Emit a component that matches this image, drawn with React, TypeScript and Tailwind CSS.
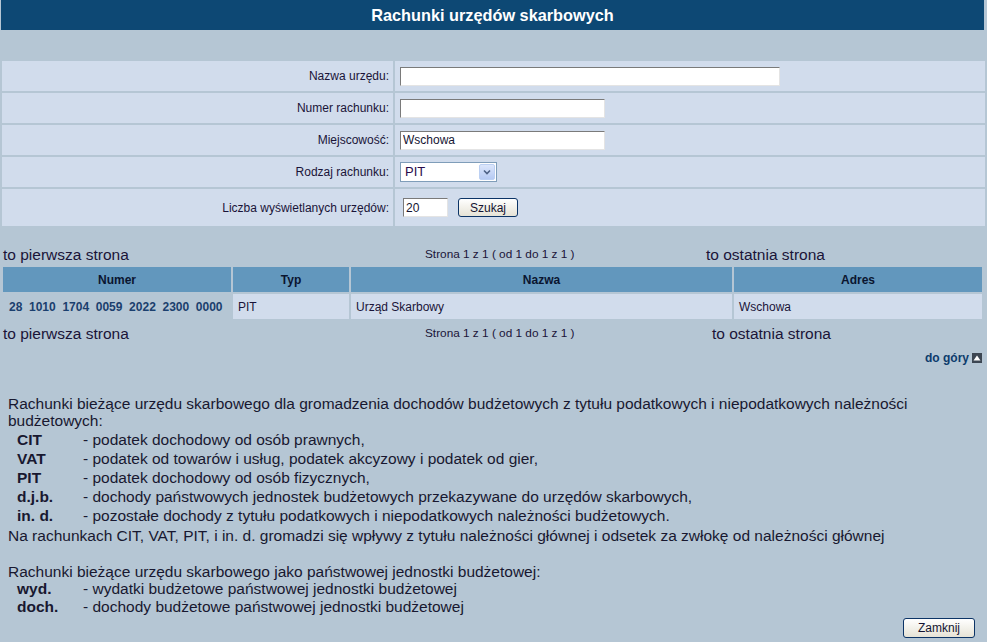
import React from "react";

const codes = [
  { code: "CIT", text: "- podatek dochodowy od osób prawnych," },
  { code: "VAT", text: "- podatek od towarów i usług, podatek akcyzowy i podatek od gier," },
  { code: "PIT", text: "- podatek dochodowy od osób fizycznych," },
  { code: "d.j.b.", text: "- dochody państwowych jednostek budżetowych przekazywane do urzędów skarbowych," },
  { code: "in. d.", text: "- pozostałe dochody z tytułu podatkowych i niepodatkowych należności budżetowych." },
];

const unitCodes = [
  { code: "wyd.", text: "- wydatki budżetowe państwowej jednostki budżetowej" },
  { code: "doch.", text: "- dochody budżetowe państwowej jednostki budżetowej" },
];

const inputClass =
  "h-[19px] bg-white border border-t-[#7a7a7a] border-l-[#7a7a7a] border-b-[#e4e4e4] border-r-[#e4e4e4] px-[2px] text-[12px] text-[#141432] outline-none";

const FormRow: React.FC<{ label: string; tall?: boolean; children: React.ReactNode }> = ({
  label,
  tall,
  children,
}) => (
  <>
    <div
      className={`${tall ? "h-[37px]" : "h-[30px]"} bg-[#d1dcec] flex items-center justify-end pr-[4px] text-[12px] text-[#1a1438]`}
    >
      {label}
    </div>
    <div className={`${tall ? "h-[37px]" : "h-[30px]"} bg-[#d1dcec] flex items-center pl-[5px]`}>
      {children}
    </div>
  </>
);

const Pager: React.FC<{ lastOffset: string }> = ({ lastOffset }) => (
  <div className="flex items-center h-[20px] text-[#1a1438]">
    <div className="w-[425px] pl-[3px] text-[15.5px]">to pierwsza strona</div>
    <div className={`${lastOffset} text-[11.8px]`}>Strona 1 z 1 ( od 1 do 1 z 1 )</div>
    <div className="text-[15.5px]">to ostatnia strona</div>
  </div>
);

export default function App() {
  return (
    <div
      className="w-[987px] h-[642px] overflow-hidden bg-[#b5c6d4] flex flex-col"
      style={{ fontFamily: '"Liberation Sans", Arial, sans-serif' }}
    >
      <div className="mx-[1px] w-[983px] h-[30px] shrink-0 bg-[#0d4874] flex items-center justify-center text-white font-bold text-[16.3px]">
        Rachunki urzędów skarbowych
      </div>

      <div className="mt-[31px] mx-[2px] grid grid-cols-[391px_1fr] gap-[2px]">
        <FormRow label="Nazwa urzędu:">
          <input className={`${inputClass} w-[380px]`} defaultValue="" />
        </FormRow>
        <FormRow label="Numer rachunku:">
          <input className={`${inputClass} w-[205px]`} defaultValue="" />
        </FormRow>
        <FormRow label="Miejscowość:">
          <input className={`${inputClass} w-[205px]`} defaultValue="Wschowa" />
        </FormRow>
        <FormRow label="Rodzaj rachunku:">
          <div className="relative w-[97px] h-[20px] bg-white border border-[#7f9db9] flex items-center pl-[4px] text-[13px] text-[#2a0a4a]">
            PIT
            <div className="absolute right-[1px] top-[1px] w-[16px] h-[16px] rounded-[2px] border border-[#bcd0f3] bg-gradient-to-b from-[#dce6fb] to-[#b6caf3] flex items-center justify-center">
              <svg width="8" height="6" viewBox="0 0 8 6">
                <path d="M1 1.5 L4 4.5 L7 1.5" fill="none" stroke="#4d6185" strokeWidth="1.6" />
              </svg>
            </div>
          </div>
        </FormRow>
        <FormRow label="Liczba wyświetlanych urzędów:" tall>
          <div className="flex items-center pl-[3px] gap-[10px]">
            <input className={`${inputClass} w-[45px] h-[18px]`} defaultValue="20" />
            <button className="w-[60px] h-[19px] rounded-[3px] border border-[#0c3466] bg-gradient-to-b from-white to-[#e6e3d6] text-[12px] text-[#141432] flex items-center justify-center">
              Szukaj
            </button>
          </div>
        </FormRow>
      </div>

      <div className="mt-[19px]">
        <Pager lastOffset="w-[281px]" />
      </div>

      <div className="mt-[2px] ml-[3px] w-[979px] grid grid-cols-[228px_116px_381px_1fr] gap-[2px] text-[12px]">
        <div className="h-[25px] bg-[#6297bd] flex items-center justify-center font-bold text-[#0a1530]">Numer</div>
        <div className="h-[25px] bg-[#6297bd] flex items-center justify-center font-bold text-[#0a1530]">Typ</div>
        <div className="h-[25px] bg-[#6297bd] flex items-center justify-center font-bold text-[#0a1530]">Nazwa</div>
        <div className="h-[25px] bg-[#6297bd] flex items-center justify-center font-bold text-[#0a1530]">Adres</div>
        <div className="h-[25px] flex items-center pl-[6px] font-bold text-[#1b3f6e] whitespace-pre">
          {"28  1010  1704  0059  2022  2300  0000"}
        </div>
        <div className="h-[25px] bg-[#d1dcec] flex items-center pl-[5px] text-[#1a1438]">PIT</div>
        <div className="h-[25px] bg-[#d1dcec] flex items-center pl-[5px] text-[#1a1438]">Urząd Skarbowy</div>
        <div className="h-[25px] bg-[#d1dcec] flex items-center pl-[5px] text-[#1a1438]">Wschowa</div>
      </div>

      <div className="mt-[5px]">
        <Pager lastOffset="w-[287px]" />
      </div>

      <div className="mt-[7px] h-[14px] flex items-center justify-end pr-[5px] gap-[3px]">
        <span className="text-[12px] font-bold text-[#0c3c6c]">do góry</span>
        <div className="w-[10px] h-[10px] bg-[#3c4652] flex items-center justify-center">
          <svg width="8" height="6" viewBox="0 0 8 6">
            <path d="M4 0.5 L7.5 5.5 L0.5 5.5 Z" fill="#ffffff" />
          </svg>
        </div>
      </div>

      <div className="mt-[30px] pl-[8px] pr-[4px] text-[15.5px] text-[#181830]">
        <p className="leading-[17px]">
          Rachunki bieżące urzędu skarbowego dla gromadzenia dochodów budżetowych z tytułu podatkowych i
          niepodatkowych należności budżetowych:
        </p>
        <div className="mt-[1px] grid grid-cols-[75px_1fr]">
          {codes.map((c) => (
            <React.Fragment key={c.code}>
              <div className="h-[19px] flex items-center pl-[9px] font-bold">{c.code}</div>
              <div className="h-[19px] flex items-center">{c.text}</div>
            </React.Fragment>
          ))}
        </div>
        <p className="mt-[1px] leading-[19px]">
          Na rachunkach CIT, VAT, PIT, i in. d. gromadzi się wpływy z tytułu należności głównej i odsetek za
          zwłokę od należności głównej
        </p>
        <p className="mt-[18px] leading-[17px]">
          Rachunki bieżące urzędu skarbowego jako państwowej jednostki budżetowej:
        </p>
        <div className="grid grid-cols-[75px_1fr]">
          {unitCodes.map((c) => (
            <React.Fragment key={c.code}>
              <div className="h-[17.5px] flex items-center pl-[9px] font-bold">{c.code}</div>
              <div className="h-[17.5px] flex items-center">{c.text}</div>
            </React.Fragment>
          ))}
        </div>
      </div>

      <div className="mt-[3px] flex justify-end pr-[12px]">
        <button className="w-[72px] h-[20px] rounded-[3px] border border-[#0c3466] bg-gradient-to-b from-white to-[#e6e3d6] text-[12px] text-[#141432] flex items-center justify-center">
          Zamknij
        </button>
      </div>
    </div>
  );
}
